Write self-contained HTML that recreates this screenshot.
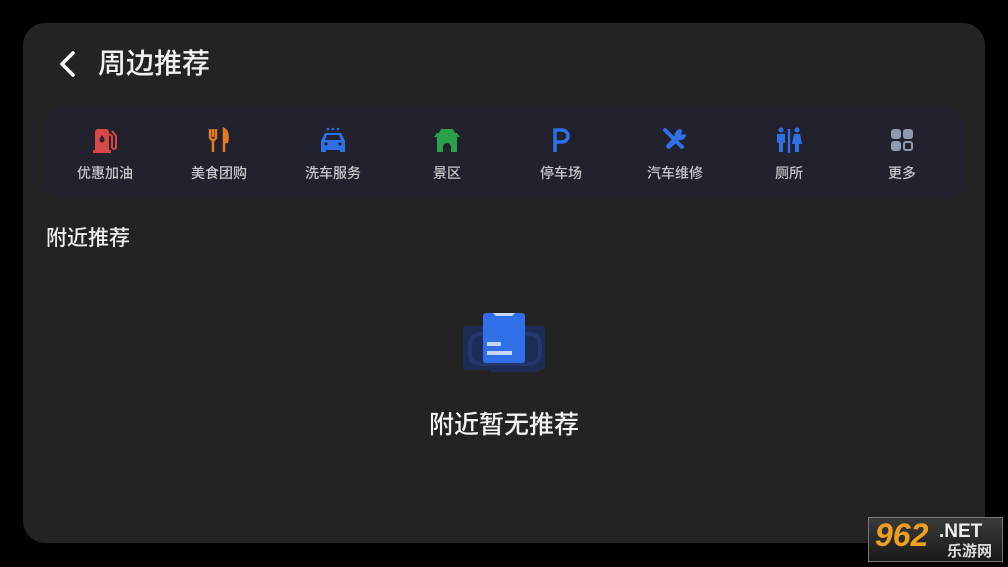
<!DOCTYPE html>
<html><head><meta charset="utf-8"><style>
*{margin:0;padding:0;box-sizing:border-box}
body{width:1008px;height:567px;background:#000;position:relative;overflow:hidden;font-family:"Liberation Sans","Noto Sans CJK SC",sans-serif;color:#fff}
.card{position:absolute;left:23px;top:23px;width:962px;height:520px;background:#232323;border-radius:22px}
.title{position:absolute;left:98px;top:44px;font-size:28px;line-height:40px;color:#f2f2f2;font-weight:500}
.bar{position:absolute;left:45px;top:107px;width:918px;height:92px;background:#22222f;border-radius:16px}
.it{position:absolute;top:0;width:114px;text-align:center;margin-left:-57px}
.it svg{position:absolute;left:43px;top:19px}
.it span{position:absolute;left:0;width:114px;top:56px;font-size:14px;color:#c8c8cc;line-height:20px;font-weight:500}
.sub{position:absolute;left:46px;top:225px;font-size:21px;line-height:28px;color:#eee;font-weight:500}
.empty{position:absolute;left:0;width:1008px;top:408px;text-align:center;font-size:25px;line-height:34px;color:#f2f2f2;font-weight:500}
.wm{position:absolute;left:868px;top:517px;width:135px;height:45px;background:linear-gradient(#3a3a3a,#1a1a1a);border:1px solid #777}
</style></head><body>
<div class="card"></div>
<svg style="position:absolute;left:56px;top:50px" width="22" height="28" viewBox="0 0 22 28"><path d="M17 3 L6 14 L17 25" fill="none" stroke="#fff" stroke-width="3.5" stroke-linecap="round" stroke-linejoin="round"/></svg>
<div class="title">周边推荐</div>
<div class="bar">
<div class="it" style="left:60px"><svg width="28" height="28" viewBox="0 0 28 28"><path d="M4 26V6a3 3 0 0 1 3-3h8a3 3 0 0 1 3 3v20z" fill="#d94848"/><path d="M18 8l3 2v11a2 2 0 0 0 4 0V10l-4-5" fill="none" stroke="#d94848" stroke-width="2"/><path d="M11 9c2 3 2.5 4 2.5 5a2.5 2.5 0 0 1-5 0c0-1 .5-2 2.5-5z" fill="#22222f"/><rect x="2" y="24" width="18" height="3" fill="#d94848"/></svg><span>优惠加油</span></div>
<div class="it" style="left:174px"><svg width="28" height="28" viewBox="0 0 28 28"><path d="M5 3v8a3 3 0 0 0 3 3v12M11 3v8a3 3 0 0 1-3 3M8 3v8" fill="none" stroke="#e57c1e" stroke-width="2.5"/><path d="M19 26V3c4 2 4 9 3 13h-3" fill="#e57c1e" stroke="#e57c1e" stroke-width="2.5"/></svg><span>美食团购</span></div>
<div class="it" style="left:288px"><svg width="28" height="28" viewBox="0 0 28 28"><circle cx="9" cy="3" r="1.3" fill="#2f6fe8"/><circle cx="14" cy="3" r="1.3" fill="#2f6fe8"/><circle cx="19" cy="3" r="1.3" fill="#2f6fe8"/><path d="M2 15l4-8h16l4 8v11h-5v-2H7v2H2z" fill="#2f6fe8"/><path d="M8 9h12l2 5H6z" fill="#22222f"/><circle cx="7" cy="18" r="1.6" fill="#22222f"/><circle cx="21" cy="18" r="1.6" fill="#22222f"/></svg><span>洗车服务</span></div>
<div class="it" style="left:402px"><svg width="28" height="28" viewBox="0 0 28 28"><path d="M8 3h12l2 4H6z M1 11h26l-3-4H4z" fill="#2aa04a"/><path d="M4 11h20v15h-6v-5a4 4 0 0 0-8 0v5H4z" fill="#2aa04a"/></svg><span>景区</span></div>
<div class="it" style="left:516px"><svg width="28" height="28" viewBox="0 0 28 28"><path d="M8 26V4h7a6 6 0 0 1 0 12H8" fill="none" stroke="#2f6fe8" stroke-width="3.5"/></svg><span>停车场</span></div>
<div class="it" style="left:630px"><svg width="28" height="28" viewBox="0 0 28 28"><path d="M4 4l17 17" stroke="#2f6fe8" stroke-width="4" stroke-linecap="round"/><path d="M6 22l8-8M19 4a5 5 0 0 0-4 6l-9 10 2 2 10-9a5 5 0 0 0 6-4l-3 1-2-2 1-3z" fill="#2f6fe8" stroke="#2f6fe8" stroke-width="2" stroke-linejoin="round"/></svg><span>汽车维修</span></div>
<div class="it" style="left:744px"><svg width="28" height="28" viewBox="0 0 28 28"><circle cx="6" cy="4" r="2.5" fill="#2f6fe8"/><circle cx="22" cy="4" r="2.5" fill="#2f6fe8"/><path d="M2 8h8v9H8v9H4v-9H2z" fill="#2f6fe8"/><rect x="12.8" y="3" width="2.4" height="24" fill="#2f6fe8"/><path d="M19 8h6l2 10h-3v8h-4v-8h-3z" fill="#2f6fe8"/></svg><span>厕所</span></div>
<div class="it" style="left:857px"><svg width="28" height="28" viewBox="0 0 28 28"><rect x="3" y="3" width="10" height="10" rx="3" fill="#8e9aae"/><rect x="15" y="3" width="10" height="10" rx="3" fill="#8e9aae"/><rect x="3" y="15" width="10" height="10" rx="3" fill="#8e9aae"/><rect x="16" y="16" width="8" height="8" rx="2" fill="none" stroke="#8e9aae" stroke-width="2"/></svg><span>更多</span></div>
</div>
<div class="sub">附近推荐</div>
<svg style="position:absolute;left:460px;top:310px" width="88" height="64" viewBox="0 0 88 64"><rect x="3" y="16" width="82" height="44" rx="3" fill="#1d2c55"/><rect x="10" y="24" width="70" height="30" rx="10" fill="none" stroke="#24386a" stroke-width="4"/><rect x="30" y="59" width="48" height="3" fill="#1d2c55"/><rect x="23" y="3" width="42" height="50" rx="3" fill="#2f6fe8"/><path d="M33 3h22l-3 3H36z" fill="#c8d8ff"/><rect x="27" y="32" width="14" height="4" fill="#c6d6f8"/><rect x="27" y="41" width="25" height="4" fill="#c6d6f8"/></svg>
<div class="empty">附近暂无推荐</div>
<div class="wm"><span style="position:absolute;left:6px;top:-1px;font:italic bold 32px 'Liberation Sans',sans-serif;color:#f0a020">962</span><span style="position:absolute;left:70px;top:3px;font:bold 19px 'Liberation Sans',sans-serif;color:#eee">.NET</span><span style="position:absolute;left:78px;top:22px;font-size:15px;font-weight:bold;color:#ddd;font-family:'Noto Sans CJK SC',sans-serif">乐游网</span></div>
</body></html>
